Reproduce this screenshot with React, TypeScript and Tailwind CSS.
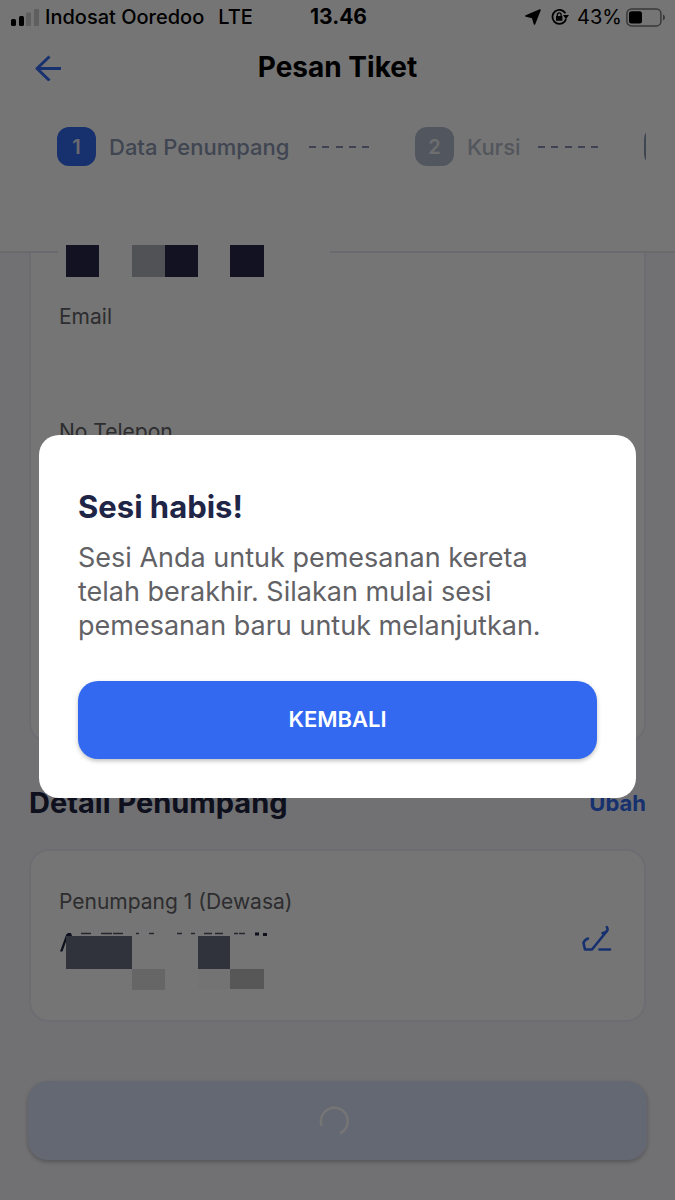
import React from 'react';

interface StepItem {
    no: number;
    label: string;
    labelWidth: string;
    badge: string;
    text: string;
}

const STEPS: StepItem[] = [
    { no: 1, label: 'Data Penumpang', labelWidth: 'w-[181px]', badge: 'bg-[#3269f0] text-[#e4e8f4]', text: 'text-[#8c96b2]' },
    { no: 2, label: 'Kursi', labelWidth: 'w-[52px]', badge: 'bg-[#b4bccd] text-[#eef0f5]', text: 'text-[#b6bccb]' },
];

const StatusBar: React.FC = () => (
    <div className="grid grid-cols-[1fr_auto_1fr] items-center h-[34px] pl-[11px] pr-[9px] text-[20px] leading-6 text-black">
        <div className="flex items-center font-medium">
            <svg width="28" height="17" viewBox="0 0 28 17" className="mr-[6px] shrink-0" aria-hidden="true">
                <rect x="0" y="10" width="5" height="7" rx="1.5" fill="#000" />
                <rect x="8" y="7" width="5" height="10" rx="1.5" fill="#000" />
                <rect x="15" y="3.5" width="5" height="13.5" rx="1" fill="#cfcfcf" />
                <rect x="23" y="0" width="5" height="17" rx="1" fill="#cfcfcf" />
            </svg>
            <span className="whitespace-nowrap">Indosat Ooredoo</span>
            <span className="ml-[14px]">LTE</span>
        </div>
        <div className="font-bold text-[21px]">13.46</div>
        <div className="flex items-center justify-end">
            <svg width="16" height="16" viewBox="0 0 16 16" className="mr-[10px]" aria-hidden="true">
                <path d="M15 1 9.500 15 7.6 8.5 1 7Z" fill="#000" stroke="#000" strokeWidth="1.6" strokeLinejoin="round" />
            </svg>
            <svg width="18" height="18" viewBox="0 0 18 18" className="mr-[8px]" fill="none" stroke="#000" strokeWidth="1.8" aria-hidden="true">
                <path d="M14.4 5.2A7 7 0 1 0 13.6 13.6L15 11" />
                <path d="M12 7h6L15 11.200Z" fill="#000" stroke="none" />
                <rect x="5" y="8" width="6.400" height="4.800" rx="0.6" fill="#000" stroke="none" />
                <path d="M6.300 8.400V6.800a1.900 1.900 0 0 1 3.800 0v1.600" strokeWidth="1.3" />
            </svg>
            <span>43%</span>
            <svg width="40" height="19" viewBox="0 0 40 19" className="ml-[4px]" aria-hidden="true">
                <rect x="0.9" y="0.9" width="34" height="17" rx="4.5" fill="none" stroke="#7c7c7c" strokeWidth="1.5" />
                <rect x="3" y="3.2" width="13" height="12.4" rx="2.5" fill="#000" />
                <path d="M37 6.5c2.6 1 2.6 5 0 6Z" fill="#7c7c7c" />
            </svg>
        </div>
    </div>
);

const Stepper: React.FC = () => (
    <ol className="flex mx-[29px] pl-7 overflow-hidden">
        {STEPS.map((step) => (
            <li key={step.no} className="flex items-center shrink-0">
                <span className={`flex items-center justify-center w-[39px] h-[39px] rounded-[12px] font-semibold text-[20px] ${step.badge}`}>
                    {step.no}
                </span>
                <span className={`ml-[13px] font-medium text-[22px] leading-7 whitespace-nowrap ${step.labelWidth} ${step.text}`}>
                    {step.label}
                </span>
                <span className="flex justify-between w-[60px] ml-[19px] mr-[46px]">
                    {[0, 1, 2, 3, 4].map((d) => (
                        <span key={d} className="w-[7px] h-[2px] bg-[#8790b2]" />
                    ))}
                </span>
            </li>
        ))}
        {/* Next step peeks in from the right edge */}
        <li className="shrink-0 w-[39px] h-[39px] rounded-[12px] bg-[#8c96b2]" />
    </ol>
);

// Contact name hidden behind pixel blocks
const MaskedContact: React.FC = () => (
    <svg width="272" height="34" viewBox="0 0 272 34" className="relative -ml-px bg-white" role="img" aria-label="Nama disamarkan">
        <rect x="8" y="1" width="33" height="32" fill="#28284a" />
        <rect x="74" y="1" width="33" height="32" fill="#b0b3bc" />
        <rect x="107" y="1" width="33" height="32" fill="#28284a" />
        <rect x="172" y="1" width="34" height="32" fill="#28284a" />
    </svg>
);

const MaskedPassenger: React.FC = () => (
    <svg width="212" height="58" viewBox="0 0 212 58" role="img" aria-label="Nama disamarkan">
        <path d="M1 19.5 7 3Q8 1 9.500 1H12L13 4H9L3.500 19.500Z" fill="#20233f" />
        <path
            d="M22 1.5h10M42 1.5h11M54 1.5h10M77 1.5h3M90 1.5h5M118 1.5h5M132 1.5h4M145 1.5h8M156 1.5h8M175 1.5h4M180 1.5h6"
            stroke="#50536a"
            strokeWidth="1.6"
        />
        <path d="M196 2h4M204 2.4h4" stroke="#20233f" strokeWidth="3" />
        <rect x="7" y="4" width="66" height="33" fill="#6b6f83" />
        <rect x="139" y="4" width="32" height="33" fill="#6b6f83" />
        <rect x="73" y="37" width="33" height="21" fill="#dedede" />
        <rect x="139" y="37" width="32" height="20" fill="#fafafa" />
        <rect x="171" y="37" width="34" height="20" fill="#bebec0" />
    </svg>
);

const SessionDialog: React.FC = () => (
    <div className="fixed inset-0 z-10 flex items-center px-[39px] pt-8 bg-black/54">
        <div role="dialog" aria-modal="true" aria-labelledby="session-title" className="w-full p-[39px] pt-[54px] rounded-[20px] bg-white">
            <h2 id="session-title" className="font-bold text-[31px] leading-9 text-[#1f2547]">Sesi habis!</h2>
            <p className="mt-4 pr-12 text-[27px] leading-[34px] text-[#626266]">
                Sesi Anda untuk pemesanan kereta telah berakhir. Silakan mulai sesi pemesanan baru untuk melanjutkan.
            </p>
            <button
                type="button"
                className="block w-full h-[78px] mt-[38px] rounded-[20px] bg-[#3269f0] font-semibold text-[22px] text-white shadow-[0_2px_4px_rgba(0,0,0,0.25)]"
            >
                KEMBALI
            </button>
        </div>
    </div>
);

export default function App() {
    return (
        <div className="min-h-screen bg-[#f6f6fc] font-['Inter','Liberation_Sans',sans-serif]">
            <header className="h-[253px] bg-white border-b-2 border-[#e4e4f0]">
                <StatusBar />
                <div className="grid grid-cols-[1fr_auto_1fr] items-center h-[66px] px-[34px]">
                    <button type="button" aria-label="Kembali ke halaman sebelumnya" className="w-7 h-7">
                        <svg width="28" height="28" viewBox="0 0 28 28" fill="none" stroke="#3269f0" strokeWidth="3" strokeLinejoin="round" aria-hidden="true">
                            <path d="M27 15.5H3M15.5 3.5 3 15.5l12.5 12" />
                        </svg>
                    </button>
                    <h1 className="font-bold text-[28px] leading-9 text-black">Pesan Tiket</h1>
                </div>
                <div className="pt-[27px]">
                    <Stepper />
                </div>
            </header>

            <main className="px-[29px] pb-10">
                <section className="flow-root h-[490px] px-7 border-2 border-t-0 border-[#ececf8] rounded-b-[20px] bg-white text-[21px] leading-7 text-[#626266]">
                    <div className="-mt-[9px]">
                        <MaskedContact />
                    </div>
                    <p className="mt-[25px]">Email</p>
                    <p className="mt-[87px]">No Telepon</p>
                </section>

                <div className="flex items-center justify-between mt-[42px]">
                    <h2 className="font-bold text-[29px] leading-9 text-[#20233f]">Detail Penumpang</h2>
                    <a href="#ubah" className="font-bold text-[22px] text-[#3269f0]">Ubah</a>
                </div>

                <section className="flex items-center justify-between h-[173px] mt-7 pl-7 pr-8 border-2 border-[#ececf8] rounded-[20px] bg-white">
                    <div className="pt-[6px]">
                        <p className="text-[21px] leading-7 text-[#626266]">Penumpang 1 (Dewasa)</p>
                        <div className="mt-4">
                            <MaskedPassenger />
                        </div>
                    </div>
                    <button type="button" aria-label="Ubah penumpang" className="mt-1">
                        <svg width="30" height="28" viewBox="0 0 30 28" fill="none" stroke="#3269f0" strokeWidth="2.6" strokeLinecap="round" strokeLinejoin="round" aria-hidden="true">
                            <path d="M6 14.5C3.5 15.5 2 17 1.5 19l1.5 6.5H10L24.5 7.5" />
                            <path d="M20.5 9.2 23.5 8.2C26 7 26 5 24.8 3" />
                            <path d="M17.500 25.500H28" />
                        </svg>
                    </button>
                </section>

                <div className="-mx-px mt-[59px]">
                    <button
                        type="button"
                        disabled
                        aria-label="Memuat"
                        className="flex items-center justify-center w-full h-[79px] rounded-[20px] bg-[#dae3f8] shadow-[0_2px_4px_rgba(0,0,0,0.25)]"
                    >
                        <svg width="30" height="36" viewBox="0 0 30 36" className="mr-2" fill="none" stroke="#fff" strokeWidth="2.4" aria-hidden="true">
                            <path d="M2.8 23A13.4 13.4 0 1 1 21 30.3" />
                        </svg>
                    </button>
                </div>
            </main>

            <SessionDialog />
        </div>
    );
}
